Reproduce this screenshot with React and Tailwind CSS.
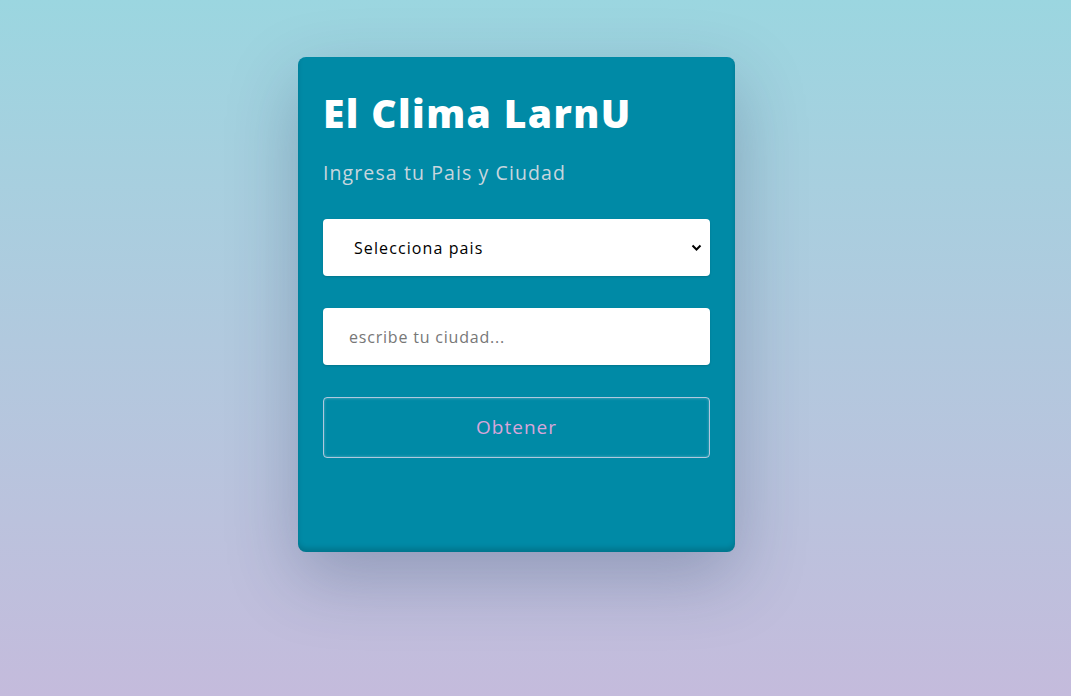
export default function App() {
  return (
    <div className="w-full h-[696px] overflow-hidden bg-gradient-to-b from-[#9bd6e0] to-[#c4bbdc] pt-[57px]" style={{ fontFamily: '"Open Sans", sans-serif' }}>
      <div className="ml-[298px] w-[437px] h-[495px] rounded-lg bg-[#008aa6] px-[25px] pt-[28px] shadow-[0_25px_70px_rgba(30,50,90,0.28),inset_0_-4px_5px_rgba(0,0,0,0.15)]">
        <h1 className="text-[39px] leading-[56px] font-extrabold text-white tracking-[1.4px]">El Clima LarnU</h1>
        <p className="mt-[18px] text-[19.5px] leading-[28px] text-[#c8d6de] tracking-[1.1px]">Ingresa tu Pais y Ciudad</p>
        <div className="mt-[32px] relative">
          <select className="appearance-none w-full h-[57px] rounded bg-white pl-[31px] text-[16px] text-black tracking-[1.1px] outline-none shadow-[0_1px_2px_rgba(0,0,0,0.15)]">
            <option>Selecciona pais</option>
          </select>
          <svg className="absolute right-[8px] top-[25px] pointer-events-none" width="11" height="8" viewBox="0 0 11 8">
            <path d="M1.5 1.5 L5.5 5.5 L9.5 1.5" fill="none" stroke="#000" strokeWidth="2" />
          </svg>
        </div>
        <input className="mt-[32px] w-full h-[57px] rounded bg-white pl-[26px] text-[16px] tracking-[0.8px] text-black placeholder:text-[#777] outline-none shadow-[0_1px_2px_rgba(0,0,0,0.15)]" placeholder="escribe tu ciudad..." />
        <button className="mt-[32px] w-full h-[61px] rounded border border-[rgba(235,220,240,0.75)] text-[19px] tracking-[1px] text-[#d8a6da] shadow-[inset_0_0_3px_rgba(255,255,255,0.35)]">Obtener</button>
      </div>
    </div>
  );
}
